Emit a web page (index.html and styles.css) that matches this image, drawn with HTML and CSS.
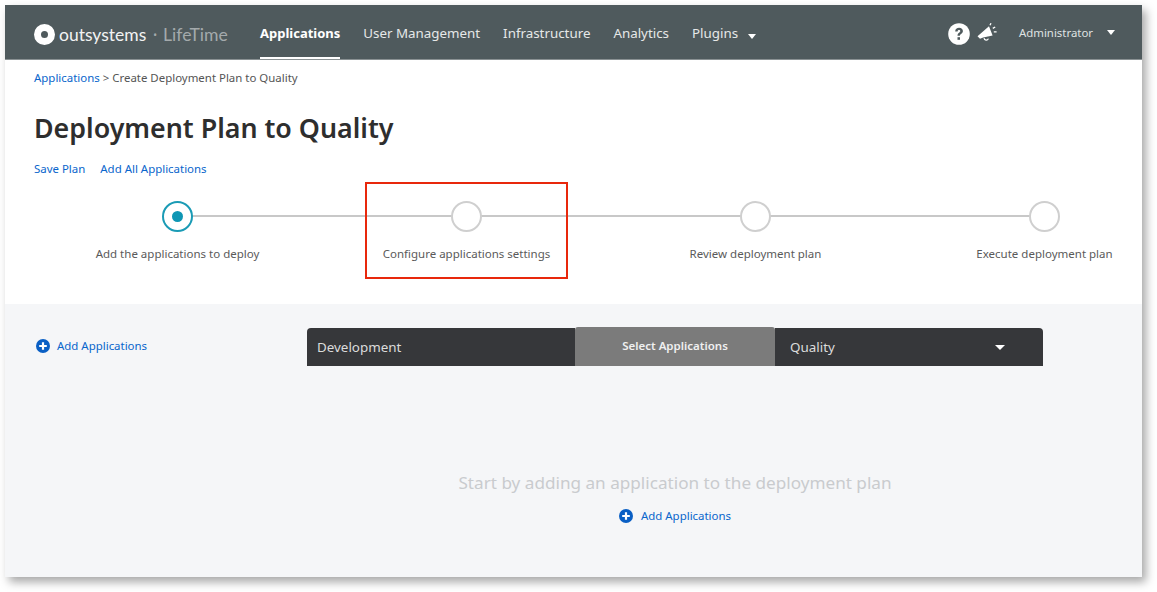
FILE: index.html
```html
<!DOCTYPE html>
<html lang="en">

<head>
    <meta charset="UTF-8">
    <title>Deployment Plan to Quality</title>
    <link rel="stylesheet" href="styles.css">
</head>

<body>
    <div class="window">
        <!-- Header -->
        <header class="navbar">
            <div class="logo">
                <span class="logo-mark"></span>
                <span class="logo-name">outsystems</span>
                <span class="logo-dot">&bull;</span>
                <span class="logo-product">LifeTime</span>
            </div>
            <nav class="menu">
                <a class="menu-item active" href="#">Applications</a>
                <a class="menu-item" href="#">User Management</a>
                <a class="menu-item" href="#">Infrastructure</a>
                <a class="menu-item" href="#">Analytics</a>
                <a class="menu-item" href="#">Plugins <span class="caret caret-plugins"></span></a>
            </nav>
            <div class="user-area">
                <svg class="icon-help" width="22" height="22" viewBox="0 0 22 22">
                    <circle cx="11" cy="11" r="10.8" fill="#fff"/>
                    <path d="M7.2 8.4c0-2.2 1.7-3.6 3.9-3.6s3.8 1.3 3.8 3.2c0 1.5-.9 2.3-1.9 3-.8.6-1.1 1-1.1 1.8H9.5c0-1.5.5-2.3 1.6-3.1.8-.6 1.2-.9 1.2-1.6s-.5-1.1-1.2-1.1c-.8 0-1.4.5-1.5 1.4z" fill="#4f5a5d"/>
                    <rect x="9.5" y="14.2" width="2.5" height="2.6" fill="#4f5a5d"/>
                </svg>
                <svg class="icon-bell" width="22" height="19" viewBox="0 0 22 19">
                    <path d="M.5 13.2 12 3.2l3.6 9.2-9.4 2.2-3.2 1.2z" fill="#fff"/>
                    <path d="M7 15.2c.4 2.4 3.6 2.6 4.4.4" fill="none" stroke="#fff" stroke-width="1.2"/>
                    <path d="M13 2.2 14 .2M15.8 5.4l2.4-1.4M16.8 8.8h2.8" stroke="#fff" stroke-width="1.3" fill="none"/>
                </svg>
                <span class="user-name">Administrator</span>
                <span class="caret"></span>
            </div>
        </header>

        <!-- Plan head -->
        <section class="plan-head">
            <div class="breadcrumb"><a href="#">Applications</a> &gt; Create Deployment Plan to Quality</div>
            <h1>Deployment Plan to Quality</h1>
            <div class="plan-actions">
                <a href="#">Save Plan</a>
                <a href="#">Add All Applications</a>
            </div>
            <div class="stepper">
                <div class="step current">
                    <span class="step-circle"></span>
                    <span class="step-label">Add the applications to deploy</span>
                </div>
                <div class="step highlighted">
                    <span class="step-circle"></span>
                    <span class="step-label">Configure applications settings</span>
                </div>
                <div class="step">
                    <span class="step-circle"></span>
                    <span class="step-label">Review deployment plan</span>
                </div>
                <div class="step last">
                    <span class="step-circle"></span>
                    <span class="step-label">Execute deployment plan</span>
                </div>
            </div>
        </section>

        <!-- Plan content -->
        <section class="plan-body">
            <div class="toolbar">
                <a class="add-link add-side" href="#">
                    <svg width="14" height="14" viewBox="0 0 14 14"><circle cx="7" cy="7" r="7" fill="#0a5fc4"/><path d="M3.2 7h7.6M7 3.2v7.6" stroke="#fff" stroke-width="2.2"/></svg>
                    Add Applications
                </a>
                <div class="env-bar">
                    <div class="env env-source">Development</div>
                    <div class="env-select">Select Applications</div>
                    <div class="env env-target">Quality <span class="caret"></span></div>
                </div>
            </div>
            <div class="empty-state">
                <p>Start by adding an application to the deployment plan</p>
                <a class="add-link" href="#">
                    <svg width="14" height="14" viewBox="0 0 14 14"><circle cx="7" cy="7" r="7" fill="#0a5fc4"/><path d="M3.2 7h7.6M7 3.2v7.6" stroke="#fff" stroke-width="2.2"/></svg>
                    Add Applications
                </a>
            </div>
        </section>
    </div>
</body>

</html>
```
FILE: styles.css
```css
/* General Styling */
html, body {
    margin: 0;
    padding: 0;
    height: 592px;
    overflow: hidden;
    background-color: #fff;
}

body {
    font-family: 'Noto Sans', 'Open Sans', sans-serif;
    color: #4a4a4a;
    padding: 5px 0 0 5px;
    box-sizing: border-box;
}

a {
    color: #0a66cc;
    text-decoration: none;
}

.window {
    width: 1137px;
    height: 572px;
    display: flex;
    flex-direction: column;
    box-shadow: 4px 5px 9px rgba(0, 0, 0, 0.35);
}

/* Header */
.navbar {
    height: 55px;
    flex: none;
    box-sizing: border-box;
    display: flex;
    align-items: stretch;
    background-color: #4f5a5d;
    border-bottom: 1px solid #8a9193;
    padding-left: 29px;
    color: #fff;
}

.logo {
    display: flex;
    align-items: center;
    width: 226px;
    box-sizing: border-box;
    padding-top: 5px;
    white-space: nowrap;
}

.logo-mark {
    width: 21px;
    height: 21px;
    box-sizing: border-box;
    border-radius: 50%;
    border: 7px solid #fff;
    background-color: #4f5a5d;
    margin-right: 4px;
}

.logo-name {
    font-family: 'Lato', sans-serif;
    font-size: 17.5px;
    color: #f2f3f3;
}

.logo-dot {
    font-size: 10px;
    color: #a4aaac;
    margin: 0 6px 0 7px;
}

.logo-product {
    font-family: 'Lato', sans-serif;
    font-size: 17.6px;
    color: #a4aaac;
}

.menu {
    display: flex;
    gap: 23px;
    flex: 1;
}

.menu-item {
    font-size: 13.35px;
    color: #e6e8e8;
    line-height: 56px;
    height: 54px;
    box-sizing: border-box;
    white-space: nowrap;
}

.menu-item.active {
    color: #fff;
    font-weight: 700;
    font-size: 13px;
    border-bottom: 2px solid #fff;
}

.caret {
    display: inline-block;
    width: 0;
    height: 0;
    border-left: 4px solid transparent;
    border-right: 4px solid transparent;
    border-top: 5px solid #fff;
}

.caret-plugins {
    margin-left: 6px;
    vertical-align: -1px;
}

.user-area {
    display: flex;
    align-items: center;
    padding: 0 27px 0 0;
}

.icon-help {
    margin: 3px 7px 0 0;
}

.icon-bell {
    margin-top: 0;
}

.user-name {
    font-size: 11.4px;
    color: #dfe2e2;
    margin: 0 14px 0 20px;
}

/* Plan head */
.plan-head {
    height: 244px;
    flex: none;
    box-sizing: border-box;
    background-color: #fff;
    padding: 10px 0 0 29px;
}

.breadcrumb {
    font-size: 11.45px;
    line-height: 15px;
    color: #555;
}

h1 {
    font-size: 26.8px;
    line-height: 36px;
    font-weight: 600;
    color: #2e2e2e;
    margin: 25px 0 0;
}

.plan-actions {
    display: flex;
    gap: 15px;
    font-size: 11.45px;
    line-height: 17px;
    margin-top: 14px;
}

.stepper {
    display: flex;
    margin: 24px 0 0 -1px;
}

.step {
    width: 289px;
    flex: none;
    display: flex;
    flex-direction: column;
    align-items: center;
    position: relative;
}

/* line running to the next circle */
.step::after {
    content: "";
    position: absolute;
    left: 50%;
    top: 14px;
    width: 289px;
    height: 2px;
    background-color: #c8c8c8;
}

.step.last::after {
    display: none;
}

.step-circle {
    width: 31px;
    height: 31px;
    box-sizing: border-box;
    border: 2px solid #cfcfcf;
    border-radius: 50%;
    background-color: #fff;
    position: relative;
    z-index: 1;
}

.step.current .step-circle {
    border-color: #1a9bb5;
}

.step.current .step-circle::before {
    content: "";
    position: absolute;
    left: 8px;
    top: 8px;
    width: 11px;
    height: 11px;
    border-radius: 50%;
    background-color: #0e96b4;
}

.step-label {
    font-size: 11.5px;
    line-height: 17px;
    margin-top: 13px;
    color: #5a5a5a;
    white-space: nowrap;
}

/* red annotation box around the second step */
.step.highlighted::before {
    content: "";
    position: absolute;
    left: 43px;
    top: -19px;
    width: 199px;
    height: 93px;
    border: 2px solid #e8280c;
    z-index: 2;
}

/* Plan content */
.plan-body {
    flex: 1;
    background-color: #f5f6f8;
    padding-top: 24px;
}

.toolbar {
    display: flex;
    align-items: flex-start;
    padding-left: 31px;
}

.add-link {
    display: inline-flex;
    align-items: center;
    gap: 8px;
    font-size: 11.45px;
    line-height: 17px;
}

.add-side {
    width: 271px;
    flex: none;
    margin-top: 9px;
    gap: 7px;
}

.env-bar {
    display: flex;
    height: 38px;
    color: #dcdcdc;
}

.env {
    width: 268px;
    box-sizing: border-box;
    background-color: #36373a;
    font-size: 13.4px;
    line-height: 39px;
    padding-left: 10px;
}

.env-source {
    border-radius: 4px 0 0 0;
}

.env-target {
    border-radius: 0 4px 0 0;
    padding: 0 38px 0 15px;
    display: flex;
    justify-content: space-between;
    align-items: center;
}

.env-target .caret {
    border-left-width: 5px;
    border-right-width: 5px;
}

.env-select {
    width: 200px;
    height: 39px;
    margin-top: -1px;
    background-color: #7b7b7b;
    border-radius: 3px 3px 0 0;
    font-size: 11.5px;
    font-weight: 600;
    line-height: 38px;
    text-align: center;
    color: #f0f0f0;
}

/* centred under the environment bar */
.empty-state {
    width: 736px;
    display: flex;
    flex-direction: column;
    align-items: center;
    margin: 105px 0 0 302px;
}

.empty-state p {
    margin: 0 0 12px;
    font-size: 17.15px;
    line-height: 24px;
    color: #c9cbce;
}
```
